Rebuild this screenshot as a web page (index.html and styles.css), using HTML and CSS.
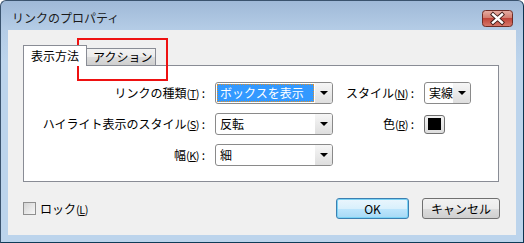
FILE: index.html
```html
<!DOCTYPE html>
<html lang="ja">
<head>
    <meta charset="UTF-8">
    <title>リンクのプロパティ</title>
    <link rel="stylesheet" href="styles.css">
</head>
<body>
    <div class="window">
        <div class="titlebar">
            <span class="title">リンクのプロパティ</span>
            <div class="close-btn">
                <svg width="31" height="17" viewBox="0 0 31 17">
                    <defs>
                        <linearGradient id="closeGrad" x1="0" y1="0" x2="0" y2="1">
                            <stop offset="0" stop-color="#e7b0a6"/>
                            <stop offset="0.45" stop-color="#d37e70"/>
                            <stop offset="0.5" stop-color="#c0453a"/>
                            <stop offset="1" stop-color="#d77a6c"/>
                        </linearGradient>
                    </defs>
                    <rect x="0.5" y="0.5" width="30" height="16" rx="3" fill="url(#closeGrad)" stroke="#6e2d26"/>
                    <path d="M11 4.5 L20 12.5 M20 4.5 L11 12.5" stroke="#3b1a16" stroke-width="4.2" stroke-linecap="square"/>
                    <path d="M11 4.5 L20 12.5 M20 4.5 L11 12.5" stroke="#ffffff" stroke-width="2.4" stroke-linecap="square"/>
                </svg>
            </div>
        </div>
        <div class="client">
            <div class="tabs">
                <div class="tab tab-active">表示方法</div>
                <div class="tab tab-mark">アクション</div>
            </div>
            <div class="panel">
                <div class="form-grid">
                    <label class="field-label">リンクの種類<span class="key">(<u>T</u>)</span> :</label>
                    <div class="combo combo-focus">
                        <span class="combo-value"><span class="selected-text">ボックスを表示</span></span>
                        <span class="combo-arrow"></span>
                    </div>
                    <label class="field-label">スタイル<span class="key">(<u>N</u>)</span> :</label>
                    <div class="combo combo-small">
                        <span class="combo-value">実線</span>
                        <span class="combo-arrow"></span>
                    </div>

                    <label class="field-label">ハイライト表示のスタイル<span class="key">(<u>S</u>)</span> :</label>
                    <div class="combo">
                        <span class="combo-value">反転</span>
                        <span class="combo-arrow"></span>
                    </div>
                    <label class="field-label">色<span class="key">(<u>R</u>)</span> :</label>
                    <div class="swatch-cell">
                        <div class="swatch"><span class="swatch-color"></span></div>
                    </div>

                    <label class="field-label">幅<span class="key">(<u>K</u>)</span> :</label>
                    <div class="combo">
                        <span class="combo-value">細</span>
                        <span class="combo-arrow"></span>
                    </div>
                </div>
            </div>
            <div class="bottom-row">
                <label class="check">
                    <span class="check-box"></span>
                    <span>ロック<span class="key">(<u>L</u>)</span></span>
                </label>
                <div class="buttons">
                    <button class="btn btn-default">OK</button>
                    <button class="btn">キャンセル</button>
                </div>
            </div>
        </div>
    </div>
</body>
</html>
```
FILE: styles.css
```css
* {
    box-sizing: border-box;
}
body {
    margin: 0;
    width: 524px;
    height: 243px;
    background: #ffffff;
    font-family: 'Noto Sans CJK JP', 'Noto Sans', sans-serif;
    font-size: 12px;
    color: #000000;
}
.window {
    height: 243px;
    display: flex;
    flex-direction: column;
    border: 1px solid #3a536e;
    border-right-color: #0d3350;
    border-bottom-color: #0f3b57;
    border-radius: 6px 6px 0 0;
    background: linear-gradient(#9fb9d8 0, #b4cce6 28px, #bcd4ec 60px, #bcd4ec);
    padding: 0 7px 7px 7px;
}
.titlebar {
    height: 29px;
    display: flex;
    justify-content: space-between;
    align-items: flex-start;
    padding: 9px 3px 0 4px;
}
.title {
    font-size: 12px;
    line-height: 16px;
    color: #1b1b1b;
}
.close-btn {
    width: 31px;
    height: 17px;
    line-height: 0;
}
.client {
    flex: 1;
    background: #f0f0f0;
    padding: 15px 16px 0 15px;
}
.tabs {
    display: flex;
    align-items: flex-end;
    height: 20px;
}
.tab {
    border: 1px solid #898c95;
    border-bottom: none;
    line-height: 15px;
    white-space: nowrap;
}
.tab-active {
    width: 64px;
    height: 21px;
    padding: 2px 0 0 7px;
    background: #ffffff;
    margin-bottom: -1px;
    position: relative;
    z-index: 1;
}
.tab-mark {
    height: 17px;
    width: 70px;
    margin-left: -1px;
    padding: 0 0 0 6px;
    background: linear-gradient(#f3f3f3, #ebebeb 50%, #dddddd 50%, #cfcfcf);
    position: relative;
}
.tab-mark::after {
    content: "";
    position: absolute;
    left: -10px;
    top: -11px;
    width: 87px;
    height: 39px;
    border: 2px solid #ee1111;
}
.panel {
    height: 117px;
    margin-right: 1px;
    border: 1px solid #898c95;
    background: #ffffff;
    padding-top: 16px;
}
.form-grid {
    display: grid;
    grid-template-columns: 191px 118px 91px auto;
    grid-auto-rows: 22px;
    row-gap: 9px;
}
.field-label {
    text-align: right;
    padding-right: 10px;
    line-height: 22px;
    white-space: nowrap;
}
.key {
    font-size: 11px;
    letter-spacing: -0.5px;
}
.combo {
    width: 118px;
    height: 22px;
    display: flex;
    border: 1px solid #8a8a8a;
    border-radius: 3px;
    background: #ffffff;
    overflow: hidden;
}
.combo-small {
    width: 47px;
}
.combo-value {
    flex: 1;
    line-height: 20px;
    padding-left: 4px;
    white-space: nowrap;
    overflow: hidden;
}
.combo-arrow {
    width: 17px;
    background: linear-gradient(#f6f6f6, #dedede);
    position: relative;
}
.combo-arrow::after {
    content: "";
    position: absolute;
    left: 5px;
    top: 8px;
    border-left: 4px solid transparent;
    border-right: 4px solid transparent;
    border-top: 4px solid #000000;
}
.combo-focus .combo-value {
    padding: 1px;
}
.selected-text {
    display: block;
    height: 18px;
    line-height: 16px;
    padding-left: 2px;
    background: #3399ff;
    color: #ffffff;
    border: 1px dotted #e0902a;
}
.swatch-cell {
    display: flex;
    align-items: center;
}
.swatch {
    width: 21px;
    height: 19px;
    border: 1px solid #707070;
    border-radius: 3px;
    background: linear-gradient(#f2f2f2, #dddddd);
    display: flex;
    align-items: center;
    justify-content: center;
}
.swatch-color {
    width: 13px;
    height: 12px;
    background: #000000;
}
.bottom-row {
    display: flex;
    align-items: center;
    justify-content: space-between;
    margin-top: 16px;
}
.check {
    display: flex;
    align-items: center;
    gap: 4px;
}
.check-box {
    width: 13px;
    height: 13px;
    border: 1px solid #8f8f8f;
    background: linear-gradient(135deg, #d4d4d4, #f7f7f7);
}
.buttons {
    display: flex;
    gap: 13px;
}
.btn {
    height: 21px;
    width: 78px;
    padding: 0;
    font-family: inherit;
    font-size: 12px;
    color: #000000;
    border: 1px solid #707070;
    border-radius: 3px;
    background: linear-gradient(#f2f2f2, #ebebeb 50%, #dddddd 50%, #cfcfcf);
}
.btn-default {
    width: 73px;
    border-color: #3c7fb1;
    box-shadow: inset 0 0 0 1px #7ad3f5;
    background: linear-gradient(#eaf6fd, #d9f0fc 50%, #bee6fd 50%, #a7d9f5);
}
```
